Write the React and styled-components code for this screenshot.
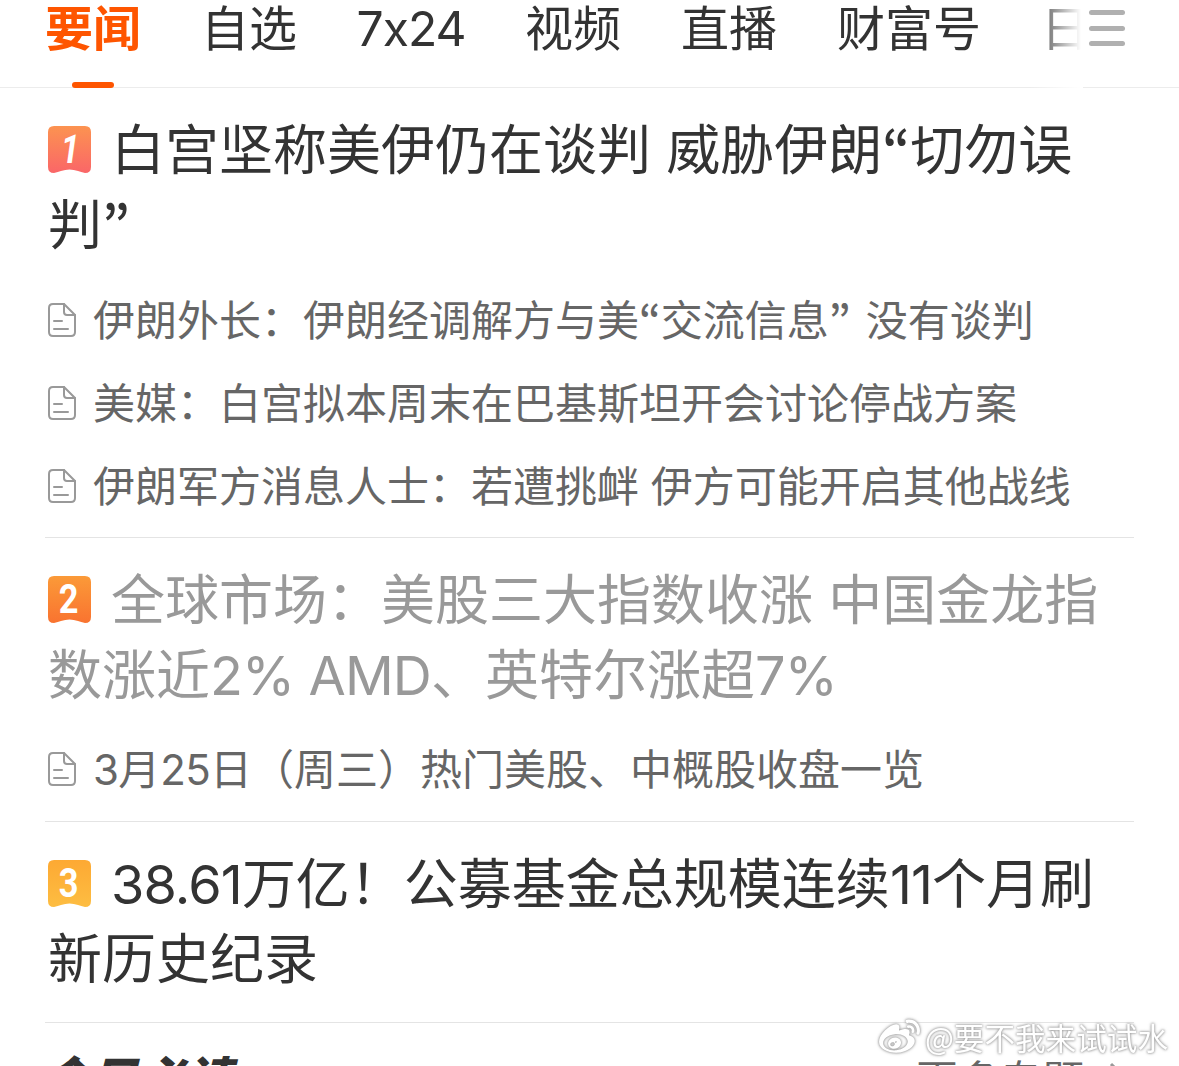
import { createGlobalStyle, styled } from 'styled-components';
import { FaWeibo } from 'react-icons/fa';

const GlobalStyle = createGlobalStyle`
  * {
    box-sizing: border-box;
  }

  body {
    margin: 0;
    background: #fff;
    color: #333;
    font-family: Inter, 'Noto Sans CJK SC', sans-serif;
    font-feature-settings: 'calt' 0;
    overflow: hidden;
  }
`;

const Page = styled.main`
  position: relative;
  width: 1179px;
  height: 1066px;
  overflow: hidden;
`;

const TabBar = styled.nav`
  display: flex;
  height: 88px;
`;

const TabList = styled.div`
  display: flex;
  gap: 60px;
  width: 1083px;
  height: 88px;
  padding-left: 45px;
  overflow: hidden;
  box-shadow: inset 0 -1px #ececec;
  mask-image: linear-gradient(to right, #000 1030px, transparent 1081px);
`;

const Tab = styled.div`
  display: flex;
  flex-direction: column;
  justify-content: space-between;
  align-items: center;
  flex: none;
  width: ${({ $width }) => $width}px;
  color: ${({ $active }) => ($active ? '#fe5500' : '#333')};
  font-size: 48px;
  font-weight: ${({ $active }) => ($active ? 700 : 400)};
  line-height: 58px;
  letter-spacing: ${({ $spacing }) => $spacing || 0}px;
  white-space: nowrap;
`;

const Indicator = styled.span`
  width: 42px;
  height: 6px;
  border-radius: 3px;
  background: #fe5500;
`;

const MenuButton = styled.button`
  display: flex;
  flex: 1;
  flex-direction: column;
  gap: 10.5px;
  margin: 0;
  padding: 10px 0 0 6px;
  border: none;
  border-bottom: 1px solid #ececec;
  background: none;
`;

const MenuLine = styled.span`
  width: 36px;
  height: 5px;
  border-radius: 2.5px;
  background: #b0b0b0;
`;

const Story = styled.article`
  height: ${({ $height }) => $height}px;
  margin: 0 45px;
  padding: 25px 0 0 3px;
  border-bottom: 1px solid #e4e4e4;
`;

const Title = styled.h2`
  margin: 0;
  color: ${({ $read }) => ($read ? '#999' : '#333')};
  font-size: 54px;
  font-weight: 400;
  line-height: 76px;
`;

const TitleLine = styled.div`
  display: flex;
  height: 75px;
  white-space: pre;
`;

const Badge = styled.svg`
  flex: none;
  width: 43px;
  height: 48px;
  margin: 13px 20px 0 0;
`;

const Links = styled.ul`
  display: flex;
  flex-direction: column;
  margin: ${({ $top }) => $top}px 0 0;
  padding: 0;
  list-style: none;
`;

const LinkRow = styled.li`
  display: flex;
  align-items: center;
  height: 83px;
  color: #666;
  font-size: 42px;
  line-height: 85px;
  white-space: pre;
`;

const DocIcon = styled.svg`
  flex: none;
  width: 28px;
  height: 34px;
  margin-right: 17px;
`;

const LinkText = styled.span`
  padding-top: 2px;
`;

const Run = styled.span`
  letter-spacing: ${({ $spacing }) => $spacing || 0}em;
`;

const Quote = styled.span`
  margin-right: ${({ $open }) => ($open ? 0 : '0.08em')};
  font-family: 'Noto Sans CJK KR', sans-serif;
  font-weight: 500;
  line-height: 1;
`;

const Footer = styled.footer`
  display: flex;
  justify-content: space-between;
  padding: 23px 54px 0 41px;
`;

const FooterTitle = styled.strong`
  padding-top: 6px;
  font-size: 48px;
  font-weight: 900;
  font-style: italic;
  line-height: 56px;
`;

const More = styled.span`
  display: flex;
  align-items: center;
  height: 62px;
  color: #666;
  font-size: 42px;
`;

const Chevron = styled.svg`
  align-self: flex-start;
  width: 16px;
  height: 26px;
  margin: 16px 0 0 25px;
`;

const Watermark = styled.div`
  position: absolute;
  right: 11px;
  bottom: 7px;
  display: flex;
  align-items: center;
  gap: 5px;
  color: #fff;
  font-family: 'Noto Sans CJK SC', sans-serif;
  font-size: 30.6px;
  line-height: 44px;
  filter: drop-shadow(0 0 1px #999) drop-shadow(0 0 1.5px #bbb);
`;

const badges = {
  1: { from: '#fc9350', to: '#fa6668', slant: -8, scale: 0.8 },
  2: { from: '#fb9a38', to: '#f97330', slant: 0, scale: 0.86 },
  3: { from: '#fda933', to: '#fdbd42', slant: 0, scale: 0.86 },
};

const tabs = [
  { label: '要闻', width: 96, active: true },
  { label: '自选', width: 96 },
  { label: '7x24', width: 108, spacing: -1 },
  { label: '视频', width: 96 },
  { label: '直播', width: 96 },
  { label: '财富号', width: 144 },
  { label: '日', width: 48 },
];

const stories = [
  {
    rank: 1,
    height: 450,
    linksTop: 15,
    lines: ['白宫坚称美伊仍在谈判 威胁伊朗“切勿误', '判”'],
    links: [
      '伊朗外长：伊朗经调解方与美“交流信息” 没有谈判',
      '美媒：白宫拟本周末在巴基斯坦开会讨论停战方案',
      '伊朗军方消息人士：若遭挑衅 伊方可能开启其他战线',
    ],
  },
  {
    rank: 2,
    height: 284,
    linksTop: 14,
    read: true,
    lines: ['全球市场：美股三大指数收涨 中国金龙指', '数涨近2% AMD、英特尔涨超7%'],
    links: ['3月25日（周三）热门美股、中概股收盘一览'],
  },
  {
    rank: 3,
    height: 201,
    lines: ['38.61万亿！公募基金总规模连续11个月刷', '新历史纪录'],
    links: [],
  },
];

function RankBadge({ rank }) {
  const { from, to, slant, scale } = badges[rank];

  return (
    <Badge viewBox="0 0 43 48">
      <defs>
        <linearGradient id={`badge-${rank}`} x1="0" y1="0" x2="0" y2="1">
          <stop offset="0" stopColor={from} />
          <stop offset="1" stopColor={to} />
        </linearGradient>
      </defs>
      <path
        d="M6 0H37Q43 0 43 6V41Q43 47 37 47Q33 46 30 45Q21.500 42 13 45Q10 46 6 47Q0 47 0 41V6Q0 0 6 0Z"
        fill={`url(#badge-${rank})`}
      />
      <text
        x="0"
        y="0"
        transform={`translate(20.500 36.500) skewX(${slant}) scale(${scale} 1)`}
        textAnchor="middle"
        fill="#fff"
        fontFamily="Roboto, sans-serif"
        fontSize="40"
        fontWeight="700"
      >
        {rank}
      </text>
    </Badge>
  );
}

function DocumentIcon() {
  return (
    <DocIcon viewBox="0 0 28 34" fill="none" stroke="#999" strokeWidth="2" strokeLinecap="round" strokeLinejoin="round">
      <path d="M5 1H16L27 12V29Q27 33 23 33H5Q1 33 1 29V5Q1 1 5 1Z" />
      <path d="M16 1V9Q16 12 19 12H27M6 18H14M6 26H20" />
    </DocIcon>
  );
}

// latin runs are set slightly tighter than the Chinese around them
function Headline({ text }) {
  const parts = text.split(/([“”]|[0-9A-Z.%]+(?: [A-Z]+)?)/).filter(Boolean);

  return parts.map((part, index) => {
    if (/[“”]/.test(part)) {
      return (
        <Quote key={index} $open={part === '“'}>
          {part}
        </Quote>
      );
    }
    return (
      <Run key={index} $spacing={/[0-9A-Z]/.test(part) ? -0.016 : 0}>
        {part}
      </Run>
    );
  });
}

export default function App() {
  return (
    <Page>
      <GlobalStyle />
      <TabBar>
        <TabList>
          {tabs.map((tab) => (
            <Tab key={tab.label} $width={tab.width} $active={tab.active} $spacing={tab.spacing}>
              {tab.label}
              {tab.active && <Indicator />}
            </Tab>
          ))}
        </TabList>
        <MenuButton type="button" aria-label="menu">
          <MenuLine />
          <MenuLine />
          <MenuLine />
        </MenuButton>
      </TabBar>

      {stories.map((story) => (
        <Story key={story.rank} $height={story.height}>
          <Title $read={story.read}>
            {story.lines.map((line, index) => (
              <TitleLine key={line}>
                {index === 0 && <RankBadge rank={story.rank} />}
                <span>
                  <Headline text={line} />
                </span>
              </TitleLine>
            ))}
          </Title>
          {story.links.length > 0 && (
            <Links $top={story.linksTop}>
              {story.links.map((link) => (
                <LinkRow key={link}>
                  <DocumentIcon />
                  <LinkText>
                    <Headline text={link} />
                  </LinkText>
                </LinkRow>
              ))}
            </Links>
          )}
        </Story>
      ))}

      <Footer>
        <FooterTitle>今日必读</FooterTitle>
        <More>
          更多专题
          <Chevron viewBox="0 0 16 26" fill="none" stroke="#999" strokeWidth="3">
            <path d="M2 2L13 13L2 24" />
          </Chevron>
        </More>
      </Footer>

      <Watermark>
        <FaWeibo size={41} />
        @要不我来试试水
      </Watermark>
    </Page>
  );
}
